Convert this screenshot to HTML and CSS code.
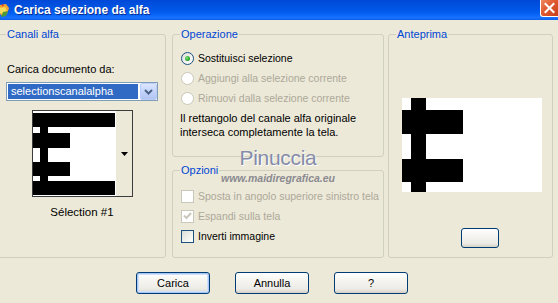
FILE: index.html
```html
<!DOCTYPE html>
<html lang="it">
<head>
  <meta charset="UTF-8" />
  <title>Carica selezione da alfa</title>
  <link rel="stylesheet" href="styles.css">
</head>
<body>

  <div class="window">

    <!-- Title bar -->
    <div class="titlebar">
      <svg class="app-icon" width="10" height="16" viewBox="0 0 10 16">
        <path d="M0 3 L6 2 L9 6 L7 12 L2 14 L0 12 Z" fill="#f2a531"/>
        <path d="M0 6 L5 5 L7 9 L3 12 L0 11 Z" fill="#f7dc5a"/>
        <path d="M3 10 L8 9 L6 14 L1 15 Z" fill="#4d9a3a"/>
        <path d="M1 3 L4 2 L3 5 Z" fill="#d8452b"/>
      </svg>
      <span class="title">Carica selezione da alfa</span>
      <span class="close">
        <svg width="17" height="16" viewBox="0 0 17 16">
          <path d="M4.5 4 L12.5 12 M12.5 4 L4.5 12" stroke="#fff" stroke-width="2" stroke-linecap="square"/>
        </svg>
      </span>
    </div>

    <div class="content">
      <div class="groups">

        <!-- Canali alfa -->
        <fieldset class="group group-channels">
          <legend>Canali alfa</legend>
          <div class="field-label">Carica documento da:</div>
          <div class="combo">
            <span class="combo-text">selectionscanalalpha</span>
            <span class="combo-btn">
              <svg width="9" height="6" viewBox="0 0 9 6">
                <path d="M1 1 L4.5 4.5 L8 1" fill="none" stroke="#4d6185" stroke-width="2"/>
              </svg>
            </span>
          </div>
          <div class="thumb">
            <svg class="thumb-img" width="82" height="85" viewBox="0 0 82 85">
              <rect x="0" y="2" width="82" height="14" fill="#000"/>
              <rect x="7" y="16" width="8" height="54" fill="#000"/>
              <rect x="0" y="22" width="37" height="15" fill="#000"/>
              <rect x="0" y="51" width="37" height="14" fill="#000"/>
              <rect x="0" y="70" width="82" height="14" fill="#000"/>
            </svg>
            <span class="thumb-drop">
              <svg width="7" height="4" viewBox="0 0 7 4"><path d="M0 0 H7 L3.5 4 Z" fill="#000"/></svg>
            </span>
          </div>
          <div class="caption">Sélection #1</div>
        </fieldset>

        <div class="middle">
          <!-- Operazione -->
          <fieldset class="group group-op">
            <legend>Operazione</legend>
            <div class="option">
              <span class="radio checked"></span>
              <span>Sostituisci selezione</span>
            </div>
            <div class="option disabled">
              <span class="radio"></span>
              <span>Aggiungi alla selezione corrente</span>
            </div>
            <div class="option disabled">
              <span class="radio"></span>
              <span>Rimuovi dalla selezione corrente</span>
            </div>
            <p class="note">Il rettangolo del canale alfa originale<br>interseca completamente la tela.</p>
          </fieldset>

          <!-- Opzioni -->
          <fieldset class="group group-opts">
            <legend>Opzioni</legend>
            <div class="option disabled">
              <span class="checkbox"></span>
              <span>Sposta in angolo superiore sinistro tela</span>
            </div>
            <div class="option disabled">
              <span class="checkbox checked">
                <svg width="9" height="8" viewBox="0 0 9 8"><path d="M1 3.5 L3.5 6 L8 1" fill="none" stroke="#cac8bb" stroke-width="2"/></svg>
              </span>
              <span>Espandi sulla tela</span>
            </div>
            <div class="option">
              <span class="checkbox"></span>
              <span>Inverti immagine</span>
            </div>
          </fieldset>
        </div>

        <!-- Anteprima -->
        <fieldset class="group group-preview">
          <legend>Anteprima</legend>
          <svg class="preview" width="140" height="94" viewBox="0 0 140 94">
            <rect width="140" height="94" fill="#fff"/>
            <rect x="9" y="0" width="15" height="94" fill="#000"/>
            <rect x="0" y="12" width="61" height="24" fill="#000"/>
            <rect x="0" y="61" width="61" height="23" fill="#000"/>
          </svg>
          <button class="xp-btn small-btn"></button>
        </fieldset>

      </div>

      <div class="buttons">
        <button class="xp-btn default">Carica</button>
        <button class="xp-btn">Annulla</button>
        <button class="xp-btn">?</button>
      </div>
    </div>

    <!-- watermark over the dialog -->
    <div class="watermark">
      <div class="wm-name">Pinuccia</div>
      <div class="wm-url">www.maidiregrafica.eu</div>
    </div>

  </div>

</body>
</html>
```

FILE: styles.css
```css
body {
  margin: 0;
  font-family: "Liberation Sans", Arial, sans-serif;
  font-size: 11px;
  color: #000;
  background-color: #ece9d8;
}

.window {
  position: relative;
  width: 558px;
  height: 303px;
  overflow: hidden;
  background-color: #ece9d8;
}

/* Title bar */
.titlebar {
  height: 20px;
  display: flex;
  align-items: center;
  background: linear-gradient(180deg, #0048d8 0%, #0052e0 30%, #0058ea 55%, #0866f6 75%, #1a72ff 88%, #0b5fe9 100%);
  color: #fff;
}

.app-icon {
  flex: none;
}

.title {
  margin-left: 4px;
  font-weight: bold;
  font-size: 12px;
  text-shadow: 1px 1px 0 #0b2a8f;
}

.close {
  margin-left: auto;
  align-self: flex-start;
  width: 17px;
  height: 16px;
  border-left: 1px solid #fff;
  border-bottom: 1px solid #fff;
  border-bottom-left-radius: 3px;
  background: linear-gradient(135deg, #ee8a63 0%, #e0582e 45%, #c8401b 100%);
}

.close svg {
  display: block;
}

/* Content */
.content {
  padding-top: 8px;
}

.groups {
  display: flex;
  align-items: flex-start;
}

.group {
  margin: 0;
  padding: 0 7px;
  border: 1px solid #d0d0bf;
  border-radius: 3px;
  box-sizing: border-box;
  min-width: 0;
}

.group legend {
  color: #0046d5;
  padding: 0 1px;
  line-height: 13px;
}

.group-channels {
  margin-left: -2px;
  width: 168px;
  height: 230px;
}

.middle {
  margin-left: 6px;
  width: 212px;
  display: flex;
  flex-direction: column;
  gap: 7px;
}

.group-op {
  height: 129px;
  padding-top: 7px;
}

.group-opts {
  height: 94px;
  padding-top: 9px;
}

.group-preview {
  margin-left: 4px;
  width: 165px;
  height: 230px;
}

/* Canali alfa */
.field-label {
  margin-top: 22px;
  line-height: 13px;
  padding-left: 1px;
}

.combo {
  margin-top: 6px;
  height: 19px;
  width: 152px;
  box-sizing: border-box;
  border: 1px solid #7f9db9;
  background-color: #fff;
  display: flex;
}

.combo-text {
  flex: 1;
  margin: 1px 2px 1px 1px;
  padding-left: 3px;
  background-color: #316ac5;
  color: #fff;
  line-height: 15px;
}

.combo-btn {
  width: 17px;
  height: 17px;
  box-sizing: border-box;
  border: 1px solid #bccdf5;
  border-radius: 2px;
  background: linear-gradient(180deg, #dce6fd 0%, #c3d3fb 50%, #b2c5f3 100%);
  display: flex;
  align-items: center;
  justify-content: center;
}

.thumb {
  margin: 9px auto 0;
  width: 101px;
  height: 87px;
  box-sizing: border-box;
  border: 1px solid #3c3c3c;
  background-color: #fff;
  display: flex;
}

.thumb-img {
  display: block;
}

.thumb-drop {
  flex: 1;
  border-left: 1px solid #fff;
  background-color: #ece9d8;
  display: flex;
  align-items: center;
  justify-content: center;
  padding-left: 1px;
}

.caption {
  margin-top: 8px;
  text-align: center;
  line-height: 14px;
  font-size: 11.5px;
}

/* Options */
.option {
  height: 20px;
  display: flex;
  align-items: center;
  gap: 4px;
  padding-left: 1px;
  white-space: nowrap;
  font-size: 10.5px;
}

.option.disabled {
  color: #aca899;
}

.radio {
  flex: none;
  width: 13px;
  height: 13px;
  box-sizing: border-box;
  border: 1px solid #1c5180;
  border-radius: 50%;
  background: linear-gradient(135deg, #dcdcd7 0%, #f4f4f2 60%, #fff 100%);
  display: flex;
  align-items: center;
  justify-content: center;
}

.radio.checked::after {
  content: "";
  width: 5px;
  height: 5px;
  border-radius: 50%;
  background: radial-gradient(circle at 35% 35%, #7ee07e 0%, #2aa82a 60%, #15861a 100%);
}

.option.disabled .radio,
.option.disabled .checkbox {
  border-color: #cac8bb;
  background: #fff;
}

.checkbox {
  flex: none;
  width: 13px;
  height: 13px;
  box-sizing: border-box;
  border: 1px solid #1c5180;
  background: linear-gradient(135deg, #dcdcd7 0%, #f2f2ef 60%, #fff 100%);
  display: flex;
  align-items: center;
  justify-content: center;
}

.note {
  margin: 3px 0 0;
  line-height: 14px;
}

/* Anteprima */
.preview {
  display: block;
  margin: 57px 0 0 6px;
}

.xp-btn {
  font-family: "Liberation Sans", Arial, sans-serif;
  font-size: 11px;
  color: #000;
  border: 1px solid #003c74;
  border-radius: 3px;
  background: linear-gradient(180deg, #ffffff 0%, #f5f4f0 40%, #ecebe5 80%, #d6d0c5 100%);
  padding: 0;
  cursor: pointer;
}

.small-btn {
  display: block;
  margin: 36px 0 0 65px;
  width: 38px;
  height: 20px;
}

.buttons {
  display: flex;
  gap: 25px;
  margin-top: 14px;
  padding-left: 136px;
}

.buttons .xp-btn {
  width: 74px;
  height: 22px;
}

.xp-btn.default {
  box-shadow: inset 0 0 0 1px #a9c6f6, inset 0 0 0 2px #cfe0fb;
}

/* Watermark */
.watermark {
  position: absolute;
  left: 214px;
  top: 147px;
  width: 128px;
  text-align: center;
  pointer-events: none;
}

.wm-name {
  font-size: 21px;
  line-height: 22px;
  color: #858ba8;
  letter-spacing: -0.3px;
  text-shadow: 1px 1px 0 #fff;
}

.wm-url {
  font-size: 10.5px;
  font-style: italic;
  font-weight: bold;
  color: #8a8a90;
  line-height: 12px;
  margin-top: 3px;
}
```
